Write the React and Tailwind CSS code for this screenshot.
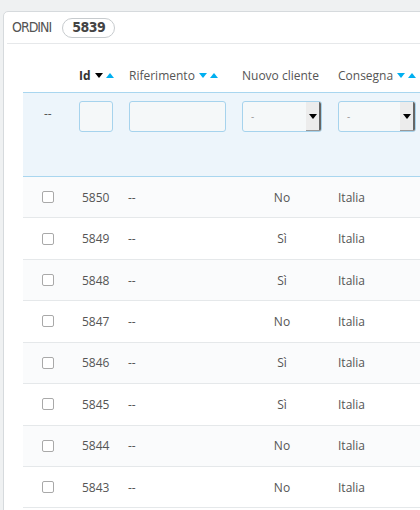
import React from "react";

const font = { fontFamily: '"Open Sans", "Liberation Sans", sans-serif' };

function Down({ color }) {
  return (
    <svg width="8" height="5" viewBox="0 0 8 5" className="inline-block">
      <path d="M0 0 L8 0 L4 5 Z" fill={color} />
    </svg>
  );
}
function Up({ color }) {
  return (
    <svg width="8" height="5" viewBox="0 0 8 5" className="inline-block">
      <path d="M0 5 L8 5 L4 0 Z" fill={color} />
    </svg>
  );
}

function Select({ w }) {
  return (
    <div
      className={`flex h-[31px] ${w} rounded-[3px] border border-[#a6d3ed] bg-[#f5f8f9] overflow-hidden`}
    >
      <div className="flex-1 flex items-center pl-[8px] text-[10px] text-[#999]">-</div>
      <div className="w-[15px] h-full bg-[#ececec] border-r-2 border-r-[#666] border-b border-b-[#999] flex items-center justify-center">
        <Down color="#000" />
      </div>
    </div>
  );
}

const rows = [
  ["5850", "No"],
  ["5849", "Sì"],
  ["5848", "Sì"],
  ["5847", "No"],
  ["5846", "Sì"],
  ["5845", "Sì"],
  ["5844", "No"],
  ["5843", "No"],
];

const cols = "grid grid-cols-[56px_50px_113px_96px_96px_1fr]";
const cond = { fontFamily: '"DejaVu Sans Condensed", "DejaVu Sans", sans-serif', fontStretch: "condensed" };

export default function App() {
  return (
    <div className="w-[420px] h-[510px] overflow-hidden bg-[#eff1f2]" style={font}>
      <div className="ml-[3px] mt-[11px] w-[600px] h-[600px] bg-white border border-[#d6dadd] rounded-tl-[5px]">
        <div className="ml-[3px] h-[32px] border-b border-[#e6e8ea] flex items-center pl-[5px]">
          <span className="text-[14px] text-[#555] tracking-[-1px]" style={cond}>
            ORDINI
          </span>
          <span
            className="ml-[11px] h-[20px] w-[53px] rounded-full border border-[#c7cbce] flex items-center justify-center text-[14px] font-bold text-[#444] tracking-[-0.5px]"
            style={cond}
          >
            5839
          </span>
        </div>
        <div className="ml-[19px] text-[12px] leading-[17px] text-[#555]">
          <div className={`${cols} h-[48px] items-end pb-[8px]`}>
            <div />
            <div className="flex items-center gap-[3px]">
              <span className="font-bold text-[#333] mr-[1px]">Id</span>
              <Down color="#000" />
              <Up color="#00aff0" />
            </div>
            <div className="flex items-center gap-[3px]">
              <span className="mr-[1px]">Riferimento</span>
              <Down color="#00aff0" />
              <Up color="#00aff0" />
            </div>
            <div>Nuovo cliente</div>
            <div className="flex items-center gap-[3px]">
              <span className="mr-[1px]">Consegna</span>
              <Down color="#00aff0" />
              <Up color="#00aff0" />
            </div>
          </div>
          <div className={`${cols} h-[85px] bg-[#edf5fb] border-y border-[#a9d6ef] pt-[8px]`}>
            <div className="pl-[21px] pt-[4px]">--</div>
            <div>
              <div className="w-[34px] h-[31px] rounded-[3px] border border-[#a6d3ed] bg-[#f5f8f9]" />
            </div>
            <div>
              <div className="w-[97px] h-[31px] rounded-[3px] border border-[#a6d3ed] bg-[#f5f8f9]" />
            </div>
            <div>
              <Select w="w-[80px]" />
            </div>
            <div>
              <Select w="w-[78px]" />
            </div>
          </div>
          {rows.map(([id, nuovo], i) => (
            <div
              key={id}
              className={`${cols} h-[41.43px] items-center border-b border-[#e5e8ea] ${
                i % 2 === 0 ? "bg-[#fafbfc]" : "bg-white"
              }`}
            >
              <div className="pl-[19px] flex items-center">
                <div className="w-[12px] h-[12px] rounded-[2px] border border-[#a9a9a9] bg-white" />
              </div>
              <div className="pl-[3px]">{id}</div>
              <div className="-ml-[1px]">--</div>
              <div className="text-center pr-[16px]">{nuovo}</div>
              <div>Italia</div>
            </div>
          ))}
        </div>
      </div>
    </div>
  );
}
